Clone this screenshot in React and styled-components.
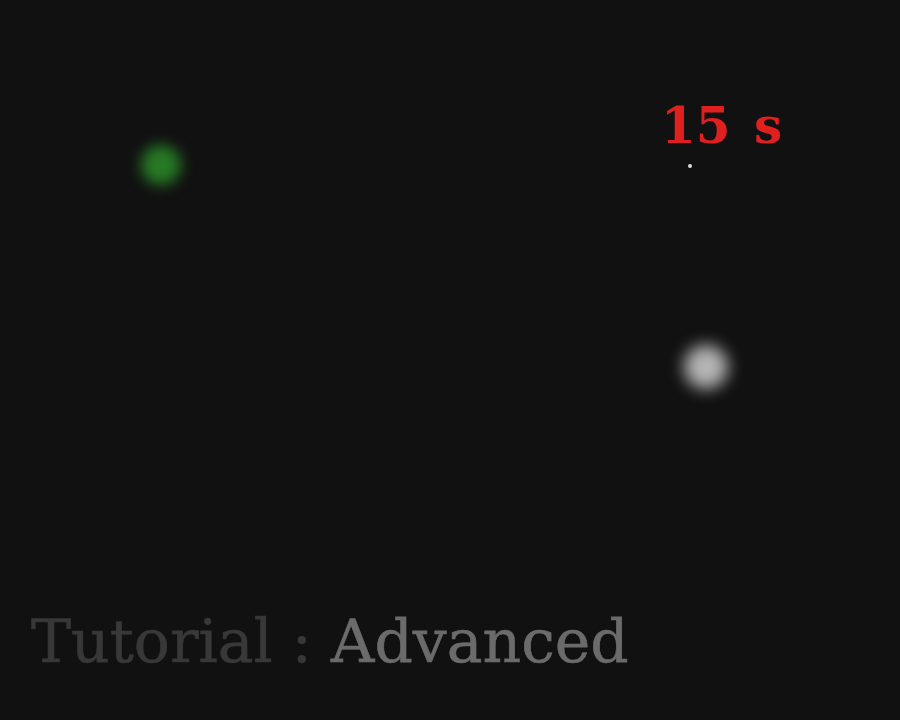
import React from 'react';
import styled, { createGlobalStyle } from 'styled-components';

const GlobalStyle = createGlobalStyle`
  html, body, #root {
    margin: 0;
    height: 100%;
    background: #111111;
  }
`

const Stage = styled.div`
  position: relative;
  width: 900px;
  height: 720px;
  overflow: hidden;
  background: #111111;
  display: flex;
  flex-direction: column;
  justify-content: flex-end;
  padding: 0 0 49px 31px;
  box-sizing: border-box;
`

const Orb = styled.div`
  position: absolute;
  left: ${p => p.x - p.size / 2}px;
  top: ${p => p.y - p.size / 2}px;
  width: ${p => p.size}px;
  height: ${p => p.size}px;
  border-radius: 50%;
  background: ${p => p.color};
  filter: blur(${p => p.blur}px);
`

const Timer = styled.div`
  position: absolute;
  left: 661px;
  top: 96px;
  font-family: "DejaVu Serif", "Liberation Serif", serif;
  font-weight: bold;
  font-size: 50px;
  color: #e0201f;
  word-spacing: 6px;
`

const Label = styled.div`
  font-family: "DejaVu Serif", "Liberation Serif", serif;
  font-size: 60px;
  line-height: 1;
  white-space: nowrap;
  -webkit-text-stroke: 0.6px currentColor;
`

const Part = styled.span`
  color: ${p => (p.dim ? '#383838' : '#6b6b6b')};
`

export default function App() {
  return (
    <>
      <GlobalStyle />
      <Stage>
        <Orb x={161} y={165} size={40} color="#277a25" blur={7} />
        <Orb x={706} y={367} size={44} color="#b5b5b5" blur={8} />
        <Orb x={690} y={166} size={4} color="#dddddd" blur={0.5} />
        <Timer>15 s</Timer>
        <Label>
          <Part dim>Tutorial : </Part>
          <Part>Advanced</Part>
        </Label>
      </Stage>
    </>
  );
}
